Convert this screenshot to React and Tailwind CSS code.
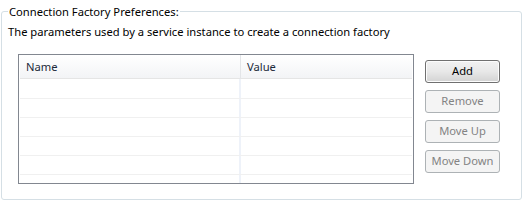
import React from 'react';

const rows = [0, 1, 2, 3, 4, 5];

const PrefButton = ({ label, enabled }) => (
  <button
    type="button"
    disabled={!enabled}
    className={
      enabled
        ? 'h-[23px] w-[75px] rounded-[3px] border border-[#707070] bg-gradient-to-b from-[#f2f2f2] via-[#e8e8e8] to-[#d3d3d3] text-[#000] shadow-[inset_0_0_0_1px_#fcfcfc]'
        : 'h-[23px] w-[75px] rounded-[3px] border border-[#adb2b5] bg-[#f4f4f4] text-[#838383]'
    }
  >
    {label}
  </button>
);

export default function App() {
  return (
    <div className="w-[523px] h-[201px] bg-white pt-[3px] font-['Noto_Sans',sans-serif] text-[11.2px] text-black">
      <fieldset className="ml-[1px] w-[521px] h-[197px] rounded-[3px] border border-[#d5dfe5]">
        <legend className="ml-[6px] px-[1px] leading-[17px]">Connection Factory Preferences:</legend>
        <p className="mt-[3px] pl-[6px] leading-[17px]">The parameters used by a service instance to create a connection factory</p>
        <div className="mt-[14px] ml-[16px] flex gap-[11px]">
          <div className="w-[396px] h-[130px] border border-[#828790] px-[1px] overflow-hidden">
            <div className="flex h-[24px] border-b border-[#e5e5e5] bg-gradient-to-b from-white to-[#f3f4f6] text-[#1c2a3a]">
              <div className="w-[221px] pl-[6px] leading-[23px] border-r border-[#e3e5e8]">Name</div>
              <div className="flex-1 pl-[6px] leading-[23px]">Value</div>
            </div>
            {rows.map((r) => (
              <div
                key={r}
                className={`flex border-b border-[#f0f0f0] ${r === 0 ? 'h-[20px]' : 'h-[19px]'}`}
              >
                <div className="w-[221px] border-r-2 border-[#eef2f9]"></div>
                <div className="flex-1"></div>
              </div>
            ))}
          </div>
          <div className="mt-[6px] flex flex-col gap-[7px]">
            <PrefButton label="Add" enabled />
            <PrefButton label="Remove" />
            <PrefButton label="Move Up" />
            <PrefButton label="Move Down" />
          </div>
        </div>
      </fieldset>
    </div>
  );
}
